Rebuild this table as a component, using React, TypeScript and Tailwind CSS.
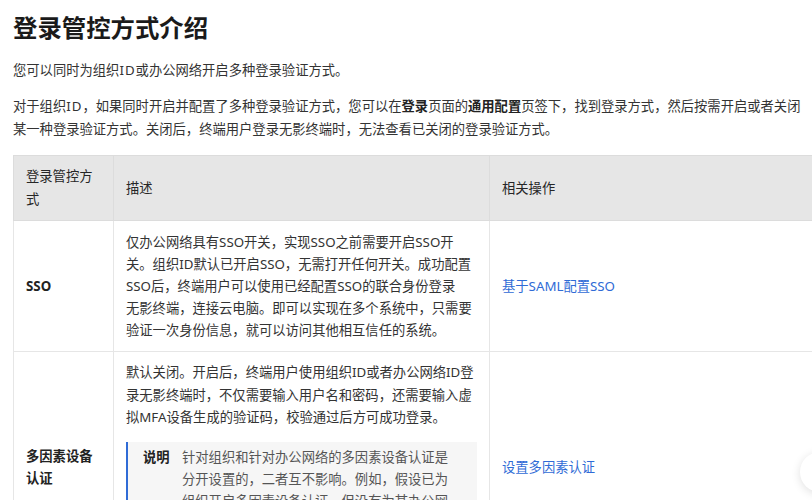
import React from "react";

const FONT = "font-['Noto_Sans','Noto_Sans_CJK_SC',sans-serif]";

function Lines({ lines, className = "" }: { lines: React.ReactNode[]; className?: string }) {
  return (
    <div className={className}>
      {lines.map((l, i) => (
        <div key={i} className="whitespace-nowrap">
          {l}
        </div>
      ))}
    </div>
  );
}

export default function App() {
  return (
    <div className={`relative w-[812px] h-[500px] overflow-hidden bg-white ${FONT} text-[#333]`}>
      <div className="w-[1000px] px-[13px] pt-[12px]">
        <h1 className="text-[24.4px] leading-[32px] font-bold text-[#1a1a1a]">登录管控方式介绍</h1>
        <p className="mt-[14.5px] text-[13.3px] leading-[23px] whitespace-nowrap">
          您可以同时为组织<span className="tracking-[1px]">ID</span>或办公网络开启多种登录验证方式。
        </p>
        <div className="mt-[13px] text-[13.3px] leading-[23px]">
          <div className="whitespace-nowrap">
            对于组织<span className="tracking-[1px]">ID</span>，如果同时开启并配置了多种登录验证方式，您可以在
            <span className="font-bold text-[#222]">登录</span>页面的
            <span className="font-bold text-[#222]">通用配置</span>
            页签下，找到登录方式，然后按需开启或者关闭
          </div>
          <div className="whitespace-nowrap">
            某一种登录验证方式。关闭后，终端用户登录无影终端时，无法查看已关闭的登录验证方式。
          </div>
        </div>

        <table className="mt-[14.5px] w-[900px] table-fixed border-collapse text-[13.3px]">
          <colgroup>
            <col className="w-[100px]" />
            <col className="w-[376px]" />
            <col />
          </colgroup>
          <thead>
            <tr className="bg-[#e6e6e6] h-[65px]">
              <th className="border border-[#dcdcdc] px-[12px] py-[9px] text-left align-middle font-normal leading-[23px] text-[#262626]">
                <Lines lines={["登录管控方", "式"]} />
              </th>
              <th className="border border-[#dcdcdc] px-[12px] text-left align-middle font-normal leading-[23px] text-[#262626]">
                描述
              </th>
              <th className="border border-[#dcdcdc] px-[12px] text-left align-middle font-normal leading-[23px] text-[#262626]">
                相关操作
              </th>
            </tr>
          </thead>
          <tbody>
            <tr>
              <td className="border border-[#e6e6e6] px-[12px] align-middle font-bold text-[#222] leading-[22px]">
                SSO
              </td>
              <td className="border border-[#e6e6e6] px-[12px] py-[10px] align-top leading-[22px]">
                <Lines
                  lines={[
                    "仅办公网络具有SSO开关，实现SSO之前需要开启SSO开",
                    "关。组织ID默认已开启SSO，无需打开任何开关。成功配置",
                    "SSO后，终端用户可以使用已经配置SSO的联合身份登录",
                    "无影终端，连接云电脑。即可以实现在多个系统中，只需要",
                    "验证一次身份信息，就可以访问其他相互信任的系统。",
                  ]}
                />
              </td>
              <td className="border border-[#e6e6e6] px-[12px] align-middle leading-[22px]">
                <span className="text-[#2f6bd6]">基于SAML配置SSO</span>
              </td>
            </tr>
            <tr>
              <td className="border border-[#e6e6e6] px-[12px] align-middle font-bold text-[#222] leading-[22px]">
                <Lines lines={["多因素设备", "认证"]} />
              </td>
              <td className="border border-[#e6e6e6] px-[12px] pt-[9px] pb-[18px] align-top">
                <div className="leading-[22.5px]">
                  <Lines
                    lines={[
                      "默认关闭。开启后，终端用户使用组织ID或者办公网络ID登",
                      "录无影终端时，不仅需要输入用户名和密码，还需要输入虚",
                      "拟MFA设备生成的验证码，校验通过后方可成功登录。",
                    ]}
                  />
                </div>
                <div className="mt-[13px] flex border-l-2 border-[#2f6bd6] bg-[#f6f6f6] pl-[15px] pt-[4px] pb-[8px] leading-[22px] text-[#555]">
                  <div className="w-[39px] shrink-0 font-bold text-[#222]">说明</div>
                  <Lines
                    lines={[
                      "针对组织和针对办公网络的多因素设备认证是",
                      "分开设置的，二者互不影响。例如，假设已为",
                      "组织开启多因素设备认证，但没有为某办公网",
                      "络开启多因素设备认证，则终端用户使用该办",
                      "公网络ID登录时，无需进行多因素设备认证。",
                    ]}
                  />
                </div>
              </td>
              <td className="border border-[#e6e6e6] px-[12px] align-middle leading-[22px]">
                <span className="text-[#2f6bd6]">设置多因素认证</span>
              </td>
            </tr>
          </tbody>
        </table>
      </div>
      <div className="absolute left-[800px] top-[452px] h-[40px] w-[40px] rounded-full bg-white shadow-[0_2px_10px_rgba(0,0,0,0.12)]" />
    </div>
  );
}
